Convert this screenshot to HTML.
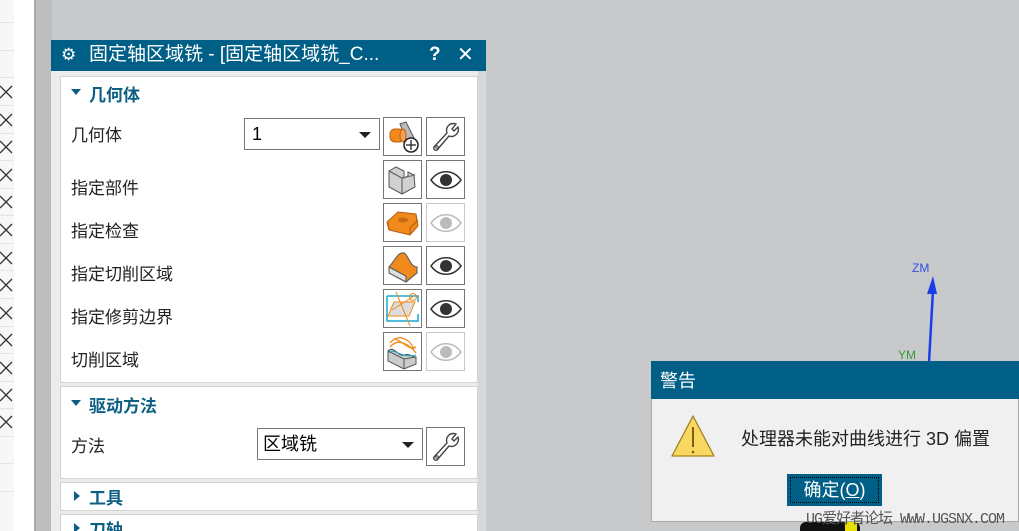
<!DOCTYPE html>
<html style="overflow:hidden;width:1019px;height:531px"><head><meta charset="utf-8"><style>
*{margin:0;padding:0;box-sizing:border-box}
body{width:1019px;height:531px;overflow:hidden;position:relative;background:#c8c9cb;font-family:"Liberation Sans","Noto Sans CJK SC",sans-serif}
.a{position:absolute}
.sec{position:absolute;left:60px;width:418px;background:#fff;border:1px solid #d4d4d4;overflow:hidden}
.h{position:absolute;left:28px;font-size:17px;font-weight:bold;color:#0d5f84}
.tri{position:absolute;left:10px;width:0;height:0}
.lbl{position:absolute;left:10px;font-size:17px;color:#222}
.btn{position:absolute;width:39px;height:39px;border:1px solid #777;background:#fff}
.btn.dis{border-color:#c8c8c8}
</style></head><body>
<div class="a" style="left:0;top:0;width:14px;height:531px;background:#f7f7f7"></div>
<div class="a" style="left:14px;top:0;width:20px;height:531px;background:#fff"></div>
<div class="a" style="left:34px;top:0;width:2px;height:531px;background:#a9aaac"></div>
<div class="a" style="left:36px;top:0;width:16px;height:531px;background:#bdbec0"></div>
<svg class="a" style="left:0;top:0" width="14" height="531">
<g stroke="#333" stroke-width="1.3">
<path d="M0 86 L12 98 M12 86 L0 98"/><path d="M0 114 L12 126 M12 114 L0 126"/><path d="M0 141 L12 153 M12 141 L0 153"/><path d="M0 169 L12 181 M12 169 L0 181"/><path d="M0 196 L12 208 M12 196 L0 208"/><path d="M0 224 L12 236 M12 224 L0 236"/><path d="M0 252 L12 264 M12 252 L0 264"/><path d="M0 279 L12 291 M12 279 L0 291"/><path d="M0 307 L12 319 M12 307 L0 319"/><path d="M0 334 L12 346 M12 334 L0 346"/><path d="M0 362 L12 374 M12 362 L0 374"/><path d="M0 389 L12 401 M12 389 L0 401"/><path d="M0 416 L12 428 M12 416 L0 428"/>
</g>
<g stroke="#e4e4e4"><path d="M0 22.5H14M0 50.5H14M0 77.5H14M0 105.5H14M0 133.5H14M0 160.5H14M0 188.5H14M0 215.5H14M0 243.5H14M0 270.5H14M0 298.5H14M0 326.5H14M0 353.5H14M0 381.5H14M0 408.5H14M0 436.5H14M0 463.5H14M0 491.5H14"/></g>
</svg>

<div class="a" style="left:51px;top:40px;width:435px;height:491px;background:#ececec"></div>
<div class="a" style="left:478px;top:71px;width:8px;height:460px;background:#d6d7d8"></div>
<div class="a" style="left:51px;top:40px;width:435px;height:31px;background:#005f87;color:#fff;font-size:19px;line-height:30px">
 <span class="a" style="left:10px;top:0;font-size:17px">⚙</span>
 <span class="a" style="left:38px;top:0">固定轴区域铣 - [固定轴区域铣_C...</span>
 <span class="a" style="left:378px;top:0;font-weight:bold">?</span>
 <span class="a" style="left:406px;top:0;font-size:20px">✕</span>
</div>

<div class="sec" style="top:76px;height:307px">
 <div class="tri" style="top:12px;border-left:5px solid transparent;border-right:5px solid transparent;border-top:6px solid #0d5f84"></div>
 <div class="h" style="top:4px">几何体</div>
 <div class="lbl" style="top:44px">几何体</div>
 <div class="a" style="left:183px;top:41px;width:136px;height:32px;border:1px solid #777;font-size:18px;line-height:30px;padding-left:7px">1<span class="a" style="right:8px;top:13px;border-left:6px solid transparent;border-right:6px solid transparent;border-top:6px solid #222"></span></div>
 <div class="lbl" style="top:97px">指定部件</div>
 <div class="lbl" style="top:140px">指定检查</div>
 <div class="lbl" style="top:183px">指定切削区域</div>
 <div class="lbl" style="top:226px">指定修剪边界</div>
 <div class="lbl" style="top:269px">切削区域</div>
</div>

<div class="btn" style="left:383px;top:117px"><svg width="37" height="37"><path d="M16 6 L22 4 L30 20 L26 30 Z" fill="#bbb" stroke="#555"/><rect x="6" y="11" width="14" height="13" rx="5" fill="#f08a1c" stroke="#c06010"/><ellipse cx="19" cy="17.5" rx="3" ry="6.5" fill="#f5a050" stroke="#c06010"/><circle cx="27" cy="27" r="7" fill="#fff" stroke="#222" stroke-width="1.5"/><path d="M27 22V32M22 27H32" stroke="#222" stroke-width="1.3"/></svg></div>
<div class="btn" style="left:426px;top:117px"><svg width="37" height="37"><path d="M7 29 L20 15 C18 9 23 4 29 6 L25 11 L27 13 L31 9 C33 15 27 20 22 18 L10 32 C8 33 6 31 7 29Z" fill="none" stroke="#444" stroke-width="1.4"/><circle cx="10" cy="29" r="1.3" fill="none" stroke="#444"/></svg></div>
<div class="btn" style="left:383px;top:160px"><svg width="37" height="37"><path d="M5 10 L12 6 L20 10 L20 17 L24 15 L24 11 L30 14 L31 26 L18 33 L5 26Z" fill="#d0d0d0" stroke="#555"/><path d="M5 10 L18 17 L18 33 M18 17 L20 16" fill="none" stroke="#555"/><path d="M18 17 L31 14" stroke="#666"/></svg></div>
<div class="btn" style="left:426px;top:160px"><svg width="37" height="37"><path d="M4 19 C12 8 26 8 34 19 C26 30 12 30 4 19Z" fill="none" stroke="#333" stroke-width="1.5"/><circle cx="19" cy="19" r="6" fill="#333"/></svg></div>
<div class="btn" style="left:383px;top:203px"><svg width="37" height="37"><path d="M3 18 L14 8 L32 10 L34 22 L26 31 L5 26Z" fill="#f08a1c" stroke="#b55a10"/><path d="M5 26 L4 19 M26 31 L26 24 L34 16" stroke="#b55a10" fill="none"/><ellipse cx="19" cy="16" rx="5" ry="2.5" fill="#c86a10"/></svg></div>
<div class="btn dis" style="left:426px;top:203px"><svg width="37" height="37"><path d="M4 19 C12 8 26 8 34 19 C26 30 12 30 4 19Z" fill="none" stroke="#bbb" stroke-width="1.5"/><circle cx="19" cy="19" r="6" fill="#bbb"/></svg></div>
<div class="btn" style="left:383px;top:246px"><svg width="37" height="37"><path d="M5 20 C12 12 14 5 20 6 C24 7 26 20 33 20 L33 26 L22 35 L5 26Z" fill="#f08a1c" stroke="#555"/><path d="M5 20 L22 29 L22 35 L5 26Z" fill="#ddd" stroke="#555"/></svg></div>
<div class="btn" style="left:426px;top:246px"><svg width="37" height="37"><path d="M4 19 C12 8 26 8 34 19 C26 30 12 30 4 19Z" fill="none" stroke="#333" stroke-width="1.5"/><circle cx="19" cy="19" r="6" fill="#333"/></svg></div>
<div class="btn" style="left:383px;top:289px"><svg width="37" height="37"><path d="M3 6H34V12M3 6V31H34V24" fill="none" stroke="#18a8d0" stroke-width="1.5"/><path d="M10 12H31L25 26H4Z" fill="#ddd" stroke="#f08a1c"/><path d="M12 2 L26 36 M8 20 L30 6" stroke="#f08a1c"/><circle cx="29" cy="7" r="3.5" fill="none" stroke="#f08a1c"/></svg></div>
<div class="btn" style="left:426px;top:289px"><svg width="37" height="37"><path d="M4 19 C12 8 26 8 34 19 C26 30 12 30 4 19Z" fill="none" stroke="#333" stroke-width="1.5"/><circle cx="19" cy="19" r="6" fill="#333"/></svg></div>
<div class="btn" style="left:383px;top:332px"><svg width="37" height="37"><path d="M4 18 C10 12 14 24 20 22 C26 20 28 24 32 24 L32 31 L20 36 L4 28Z" fill="#ccc" stroke="#555"/><path d="M4 18 L20 26 L32 24 M20 26 L20 36" fill="none" stroke="#555"/><path d="M6 10 C14 0 26 6 30 16 M6 14 C14 4 26 12 32 20 M10 6 C20 8 24 18 32 14" fill="none" stroke="#f08a1c" stroke-width="1.3"/><path d="M4 20 C12 14 16 26 32 22" stroke="#18a8d0" fill="none"/></svg></div>
<div class="btn dis" style="left:426px;top:332px"><svg width="37" height="37"><path d="M4 19 C12 8 26 8 34 19 C26 30 12 30 4 19Z" fill="none" stroke="#bbb" stroke-width="1.5"/><circle cx="19" cy="19" r="6" fill="#bbb"/></svg></div>

<div class="sec" style="top:386px;height:93px">
 <div class="tri" style="top:13px;border-left:5px solid transparent;border-right:5px solid transparent;border-top:6px solid #0d5f84"></div>
 <div class="h" style="top:5px">驱动方法</div>
 <div class="lbl" style="top:45px">方法</div>
 <div class="a" style="left:196px;top:41px;width:166px;height:32px;border:1px solid #777;font-size:18px;line-height:30px;padding-left:5px">区域铣<span class="a" style="right:8px;top:13px;border-left:6px solid transparent;border-right:6px solid transparent;border-top:6px solid #222"></span></div>
</div>
<div class="btn" style="left:426px;top:427px"><svg width="37" height="37"><path d="M7 29 L20 15 C18 9 23 4 29 6 L25 11 L27 13 L31 9 C33 15 27 20 22 18 L10 32 C8 33 6 31 7 29Z" fill="none" stroke="#444" stroke-width="1.4"/><circle cx="10" cy="29" r="1.3" fill="none" stroke="#444"/></svg></div>

<div class="sec" style="top:482px;height:29px">
 <div class="tri" style="top:8px;left:13px;border-top:5px solid transparent;border-bottom:5px solid transparent;border-left:6px solid #0d5f84"></div>
 <div class="h" style="top:1px">工具</div>
</div>
<div class="sec" style="top:514px;height:17px;border-bottom:none">
 <div class="tri" style="top:8px;left:13px;border-top:5px solid transparent;border-bottom:5px solid transparent;border-left:6px solid #0d5f84"></div>
 <div class="h" style="top:1px">刀轴</div>
</div>

<svg class="a" style="left:880px;top:250px" width="139" height="115">
<path d="M49 112 L53 40" stroke="#1c3ee8" stroke-width="2.5"/><path d="M53 26 L47 44 L57 44Z" fill="#1c3ee8"/>
<text x="32" y="22" font-size="12" fill="#3050e0" font-family="Liberation Sans">ZM</text>
<text x="18" y="109" font-size="12" fill="#3a9a3a" font-family="Liberation Sans">YM</text>
</svg>

<div class="a" style="left:651px;top:361px;width:368px;height:161px;background:#f0f0f0;border:1px solid #aaa"></div>
<div class="a" style="left:651px;top:361px;width:368px;height:38px;background:#005f87;color:#fff;font-size:18px;line-height:40px;padding-left:9px">警告</div>
<svg class="a" style="left:669px;top:413px" width="48" height="48"><path d="M24 3 L45 43 L3 43Z" fill="#f8d860" stroke="#a08020" stroke-width="1.3" stroke-linejoin="round"/><path d="M24 14 V34" stroke="#806010" stroke-width="2"/><circle cx="24" cy="39" r="1.3" fill="#806010"/></svg>
<div class="a" style="left:741px;top:425px;font-size:18px;color:#222">处理器未能对曲线进行 3D 偏置</div>
<div class="a" style="left:787px;top:474px;width:95px;height:32px;background:#005f87;color:#fff;font-size:18px;line-height:32px;text-align:center"><div class="a" style="left:3px;top:3px;right:3px;bottom:3px;border:1px dotted #000"></div>确定(<u>O</u>)</div>
<div class="a" style="left:800px;top:522px;width:60px;height:9px;background:#111;border-radius:6px 6px 0 0"></div>
<div class="a" style="left:845px;top:522px;width:12px;height:9px;background:#e8e000"></div>
<div class="a" style="left:806px;top:507px;font-size:15px;color:#555;white-space:nowrap;font-family:'Liberation Mono','Noto Sans CJK SC',monospace;letter-spacing:-1px">UG爱好者论坛 WWW.UGSNX.COM</div>
</body></html>
